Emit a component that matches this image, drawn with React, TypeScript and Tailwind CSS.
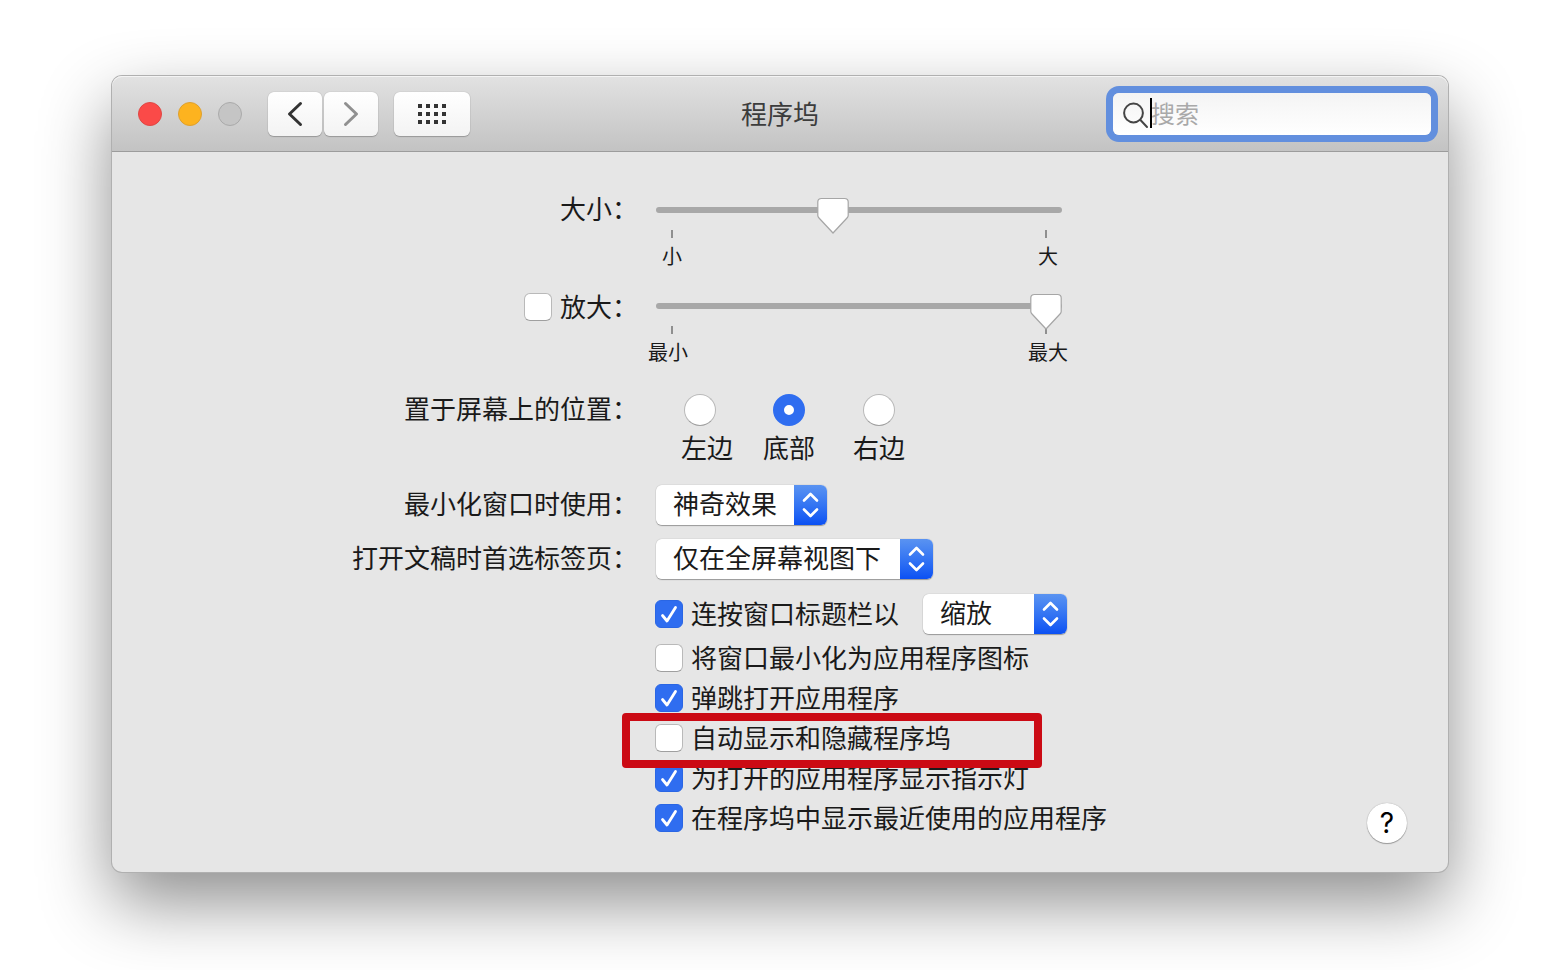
import { useState } from "react";
import type { ReactNode } from "react";

const Chevrons = () => (
  <svg viewBox="0 0 33 40" className="h-10 w-[33px]" fill="none" stroke="white" strokeWidth="2.6" strokeLinecap="round" strokeLinejoin="round">
    <path d="M10 15.5 16.5 9 23 15.5" />
    <path d="M10 24.5 16.5 31 23 24.5" />
  </svg>
);

type CheckBoxProps = {
  id: string;
  label: string;
  defaultChecked?: boolean;
};

const CheckBox = ({ id, label, defaultChecked }: CheckBoxProps) => (
  <div className="flex items-center gap-2">
    <span className="relative size-7 shrink-0">
      <input
        id={id}
        type="checkbox"
        defaultChecked={defaultChecked}
        className="peer block size-7 appearance-none rounded-md border border-[#b9b9b9] border-b-[#9f9f9f] bg-white checked:border-[#2a66e4] checked:bg-[#2f6df0]"
      />
      <svg
        viewBox="0 0 28 28"
        className="pointer-events-none absolute inset-0 hidden size-7 peer-checked:block"
        fill="none"
        stroke="white"
        strokeWidth="2.8"
        strokeLinecap="round"
        strokeLinejoin="round"
      >
        <path d="M7.5 15.5 12 21 20.5 7.5" />
      </svg>
    </span>
    <label htmlFor={id} className="pb-0.5 whitespace-nowrap">{label}</label>
  </div>
);

type PopUpProps = {
  id: string;
  options: string[];
  width: string;
  ariaLabel?: string;
};

const PopUp = ({ id, options, width, ariaLabel }: PopUpProps) => (
  <div className={`relative h-10 rounded-md shadow-[0_0_1px_#8f8f8f,0_1px_1px_#999999] ${width}`}>
    <select
      id={id}
      aria-label={ariaLabel}
      className="block h-10 w-full appearance-none rounded-md bg-white pr-8 pb-1 pl-[17px] leading-8 text-[#1a1a1a] outline-none"
    >
      {options.map((o) => (
        <option key={o}>{o}</option>
      ))}
    </select>
    <span className="pointer-events-none absolute inset-y-0 right-0 rounded-r-md bg-linear-to-b from-[#5a93f1] to-[#0b50f3]">
      <Chevrons />
    </span>
  </div>
);

type SliderProps = {
  id: string;
  start: number;
  minLabel: string;
  maxLabel: string;
  ariaLabel?: string;
};

const Slider = ({ id, start, minLabel, maxLabel, ariaLabel }: SliderProps) => {
  const [value, setValue] = useState(start);

  return (
    <div className="h-24 w-[406px]">
      <div className="relative h-[34px]">
        <input
          id={id}
          type="range"
          min={0}
          max={100}
          value={value}
          aria-label={ariaLabel}
          onChange={(e) => setValue(Number(e.target.value))}
          className="block h-[34px] w-full appearance-none bg-transparent outline-none [&::-webkit-slider-runnable-track]:h-[6px] [&::-webkit-slider-runnable-track]:rounded-full [&::-webkit-slider-runnable-track]:bg-[#a8a8a8] [&::-webkit-slider-thumb]:h-[6px] [&::-webkit-slider-thumb]:w-8 [&::-webkit-slider-thumb]:appearance-none"
        />
        {/* Pointed thumb, drawn over the native one */}
        <svg
          viewBox="0 0 32 38"
          className="pointer-events-none absolute top-1 z-10 h-[38px] w-8"
          style={{ left: `calc((100% - 32px) * ${value / 100})` }}
        >
          <path
            d="M4.5 1.5H27.5Q31.2 1.5 31.2 5V18.5Q31.2 19.8 30 21L16 36 2 21Q.8 19.8 .8 18.5V5Q.8 1.5 4.5 1.5Z"
            fill="white"
            stroke="#a6a6a6"
            strokeWidth="1.2"
          />
        </svg>
      </div>
      <div className="flex justify-between px-[15px] pt-[3px]">
        <span className="h-2 w-0.5 bg-[#8f8f8f]"></span>
        <span className="h-2 w-0.5 bg-[#8f8f8f]"></span>
      </div>
      <div className="-mr-1.5 -ml-2 flex justify-between pt-1 text-center text-xl leading-7">
        <span className={minLabel.length === 1 ? "w-12" : "w-10"}>{minLabel}</span>
        <span className="w-10">{maxLabel}</span>
      </div>
    </div>
  );
};

const Row = ({ label, className, children }: { label: ReactNode; className: string; children: ReactNode }) => (
  <div className={`grid grid-cols-[2fr_3fr] gap-4 ${className}`}>
    <div className="flex justify-end pr-0.5 whitespace-nowrap">{label}</div>
    <div>{children}</div>
  </div>
);

const positions = [
  { id: "left", label: "左边", item: "w-[88px] items-start pl-[25px]", radio: "ml-[3px]" },
  { id: "bottom", label: "底部", item: "w-[90px] items-center", radio: "" },
  { id: "right", label: "右边", item: "w-[90px] items-center", radio: "" },
];

const toolButton =
  "flex h-11 items-center justify-center rounded-md bg-linear-to-b from-white to-[#f3f3f3] shadow-[0_0_1px_#8f8f8f,0_1px_1px_#999999]";

const TitleBar = () => (
  <header className="grid h-[76px] grid-cols-[1fr_auto_1fr] items-center rounded-t-[10px] border-b border-[#9c9c9c] bg-linear-to-b from-[#e2e2e2] to-[#c3c3c3] shadow-[inset_0_1px_0_#f4f4f4]">
    <div className="flex items-center pl-[26px]">
      <div className="flex gap-4">
        <button aria-label="关闭" className="size-6 rounded-full border border-[#df4744] bg-[#fb4a48]"></button>
        <button aria-label="最小化" className="size-6 rounded-full border border-[#dea02f] bg-[#fdb31f]"></button>
        <button aria-label="缩放窗口" disabled className="size-6 rounded-full border border-[#aaaaaa] bg-[#c5c5c5]"></button>
      </div>
      <div className="ml-[26px] flex gap-0.5">
        <button aria-label="后退" className={`${toolButton} w-[54px]`}>
          <svg viewBox="0 0 16 26" className="h-[26px] w-4" fill="none" stroke="#333" strokeWidth="3" strokeLinecap="round" strokeLinejoin="round">
            <path d="M13.5 2.5 2.5 13 13.5 23.5" />
          </svg>
        </button>
        <button aria-label="前进" className={`${toolButton} w-[54px]`}>
          <svg viewBox="0 0 16 26" className="h-[26px] w-4" fill="none" stroke="#909090" strokeWidth="3" strokeLinecap="round" strokeLinejoin="round">
            <path d="M2.5 2.5 13.5 13 2.5 23.5" />
          </svg>
        </button>
      </div>
      <button aria-label="显示全部" className={`${toolButton} ml-4 w-[76px]`}>
        <span className="grid grid-cols-4 gap-1">
          {Array.from({ length: 12 }, (_, i) => (
            <span key={i} className="size-1 bg-[#333333]"></span>
          ))}
        </span>
      </button>
    </div>

    <h1 className="pb-0.5 text-[26px] leading-[34px] text-[#3c3c3c]">程序坞</h1>

    <div className="flex justify-end pr-[17px]">
      <div className="relative h-[42px] w-[318px]">
        <input
          type="search"
          aria-label="搜索"
          placeholder="搜索"
          className="block h-[42px] w-full rounded-md bg-linear-to-b from-[#f4f4f4] to-white pb-0.5 pl-[38px] text-2xl caret-transparent outline-none ring-7 ring-[#628fde] placeholder:text-[#a9a9a9]"
        />
        <svg viewBox="0 0 28 28" className="pointer-events-none absolute top-2 left-2 size-7" fill="none" stroke="#454545" strokeWidth="2" strokeLinecap="round">
          <circle cx="12.5" cy="12" r="9.4" />
          <path d="M19.2 18.8 26 26" />
        </svg>
        <span className="pointer-events-none absolute top-[5px] left-[37px] h-[30px] w-0.5 bg-black"></span>
      </div>
    </div>
  </header>
);

const App = () => {
  return (
    <div className="min-h-screen bg-white px-28 pt-[76px] pb-[98px] font-['Noto_Sans_CJK_SC',sans-serif] text-[26px] leading-[34px] text-[#1a1a1a]">
      <main className="rounded-[10px] bg-[#e6e6e6] shadow-[0_0_0_1px_#b0b0b0,0_30px_70px_rgba(0,0,0,0.45)]">
        <TitleBar />

        <div className="pt-[41px] pb-[29px]">
          <Row className="h-24" label={<label htmlFor="size" className="leading-[30px]">大小：</label>}>
            <Slider id="size" start={43} minLabel="小" maxLabel="大" />
          </Row>

          <Row className="h-[104px]" label={<div className="h-[34px]"><CheckBox id="magnify" label="放大：" /></div>}>
            <Slider id="magnification" start={100} minLabel="最小" maxLabel="最大" ariaLabel="放大" />
          </Row>

          <Row className="h-[92px]" label={<span id="position" className="leading-[30px]">置于屏幕上的位置：</span>}>
            <div role="radiogroup" aria-labelledby="position" className="flex pt-px">
              {positions.map((p) => (
                <div key={p.id} className={`flex flex-col gap-1 ${p.item}`}>
                  <input
                    id={p.id}
                    type="radio"
                    name="position"
                    defaultChecked={p.id === "bottom"}
                    className={`size-8 appearance-none rounded-full border border-[#b9b9b9] border-b-[#9f9f9f] bg-white checked:border-[11px] checked:border-[#2f6df0] ${p.radio}`}
                  />
                  <label htmlFor={p.id}>{p.label}</label>
                </div>
              ))}
            </div>
          </Row>

          <Row className="h-[54px] items-start leading-9" label={<label htmlFor="effect">最小化窗口时使用：</label>}>
            <PopUp id="effect" width="w-[171px]" options={["神奇效果", "缩放效果"]} />
          </Row>

          <Row className="h-[55px] items-start leading-9" label={<label htmlFor="tabs">打开文稿时首选标签页：</label>}>
            <PopUp id="tabs" width="w-[277px]" options={["仅在全屏幕视图下", "始终", "手动"]} />
          </Row>

          <div className="grid grid-cols-[2fr_3fr] gap-4">
            <div></div>
            <div className="flex items-end justify-between pr-[41px]">
              <div className="-ml-px pb-[5px]">
                <div className="mb-1 flex h-10 items-center gap-6">
                  <CheckBox id="doubleClick" label="连按窗口标题栏以" defaultChecked />
                  <PopUp id="action" width="w-36" ariaLabel="连按窗口标题栏" options={["缩放", "最小化"]} />
                </div>
                <div className="flex h-10 items-center">
                  <CheckBox id="intoIcon" label="将窗口最小化为应用程序图标" />
                </div>
                <div className="flex h-10 items-center">
                  <CheckBox id="bounce" label="弹跳打开应用程序" defaultChecked />
                </div>
                <div className="flex h-10 items-center">
                  <CheckBox id="autoHide" label="自动显示和隐藏程序坞" />
                </div>
                <div className="relative flex h-10 items-center">
                  <CheckBox id="indicator" label="为打开的应用程序显示指示灯" defaultChecked />
                  {/* Red marker round the auto-hide row */}
                  <div className="pointer-events-none absolute -top-[45px] -left-[33px] h-[55px] w-[420px] rounded-sm border-8 border-[#cb0a14]"></div>
                </div>
                <div className="flex h-10 items-center">
                  <CheckBox id="recent" label="在程序坞中显示最近使用的应用程序" defaultChecked />
                </div>
              </div>
              <button
                aria-label="帮助"
                className="size-10 rounded-full bg-white font-['Inter',sans-serif] text-[28px] leading-10 text-black shadow-[0_0_1px_#8f8f8f,0_1px_1px_#999999]"
              >
                ?
              </button>
            </div>
          </div>
        </div>
      </main>
    </div>
  );
};

export default App;
